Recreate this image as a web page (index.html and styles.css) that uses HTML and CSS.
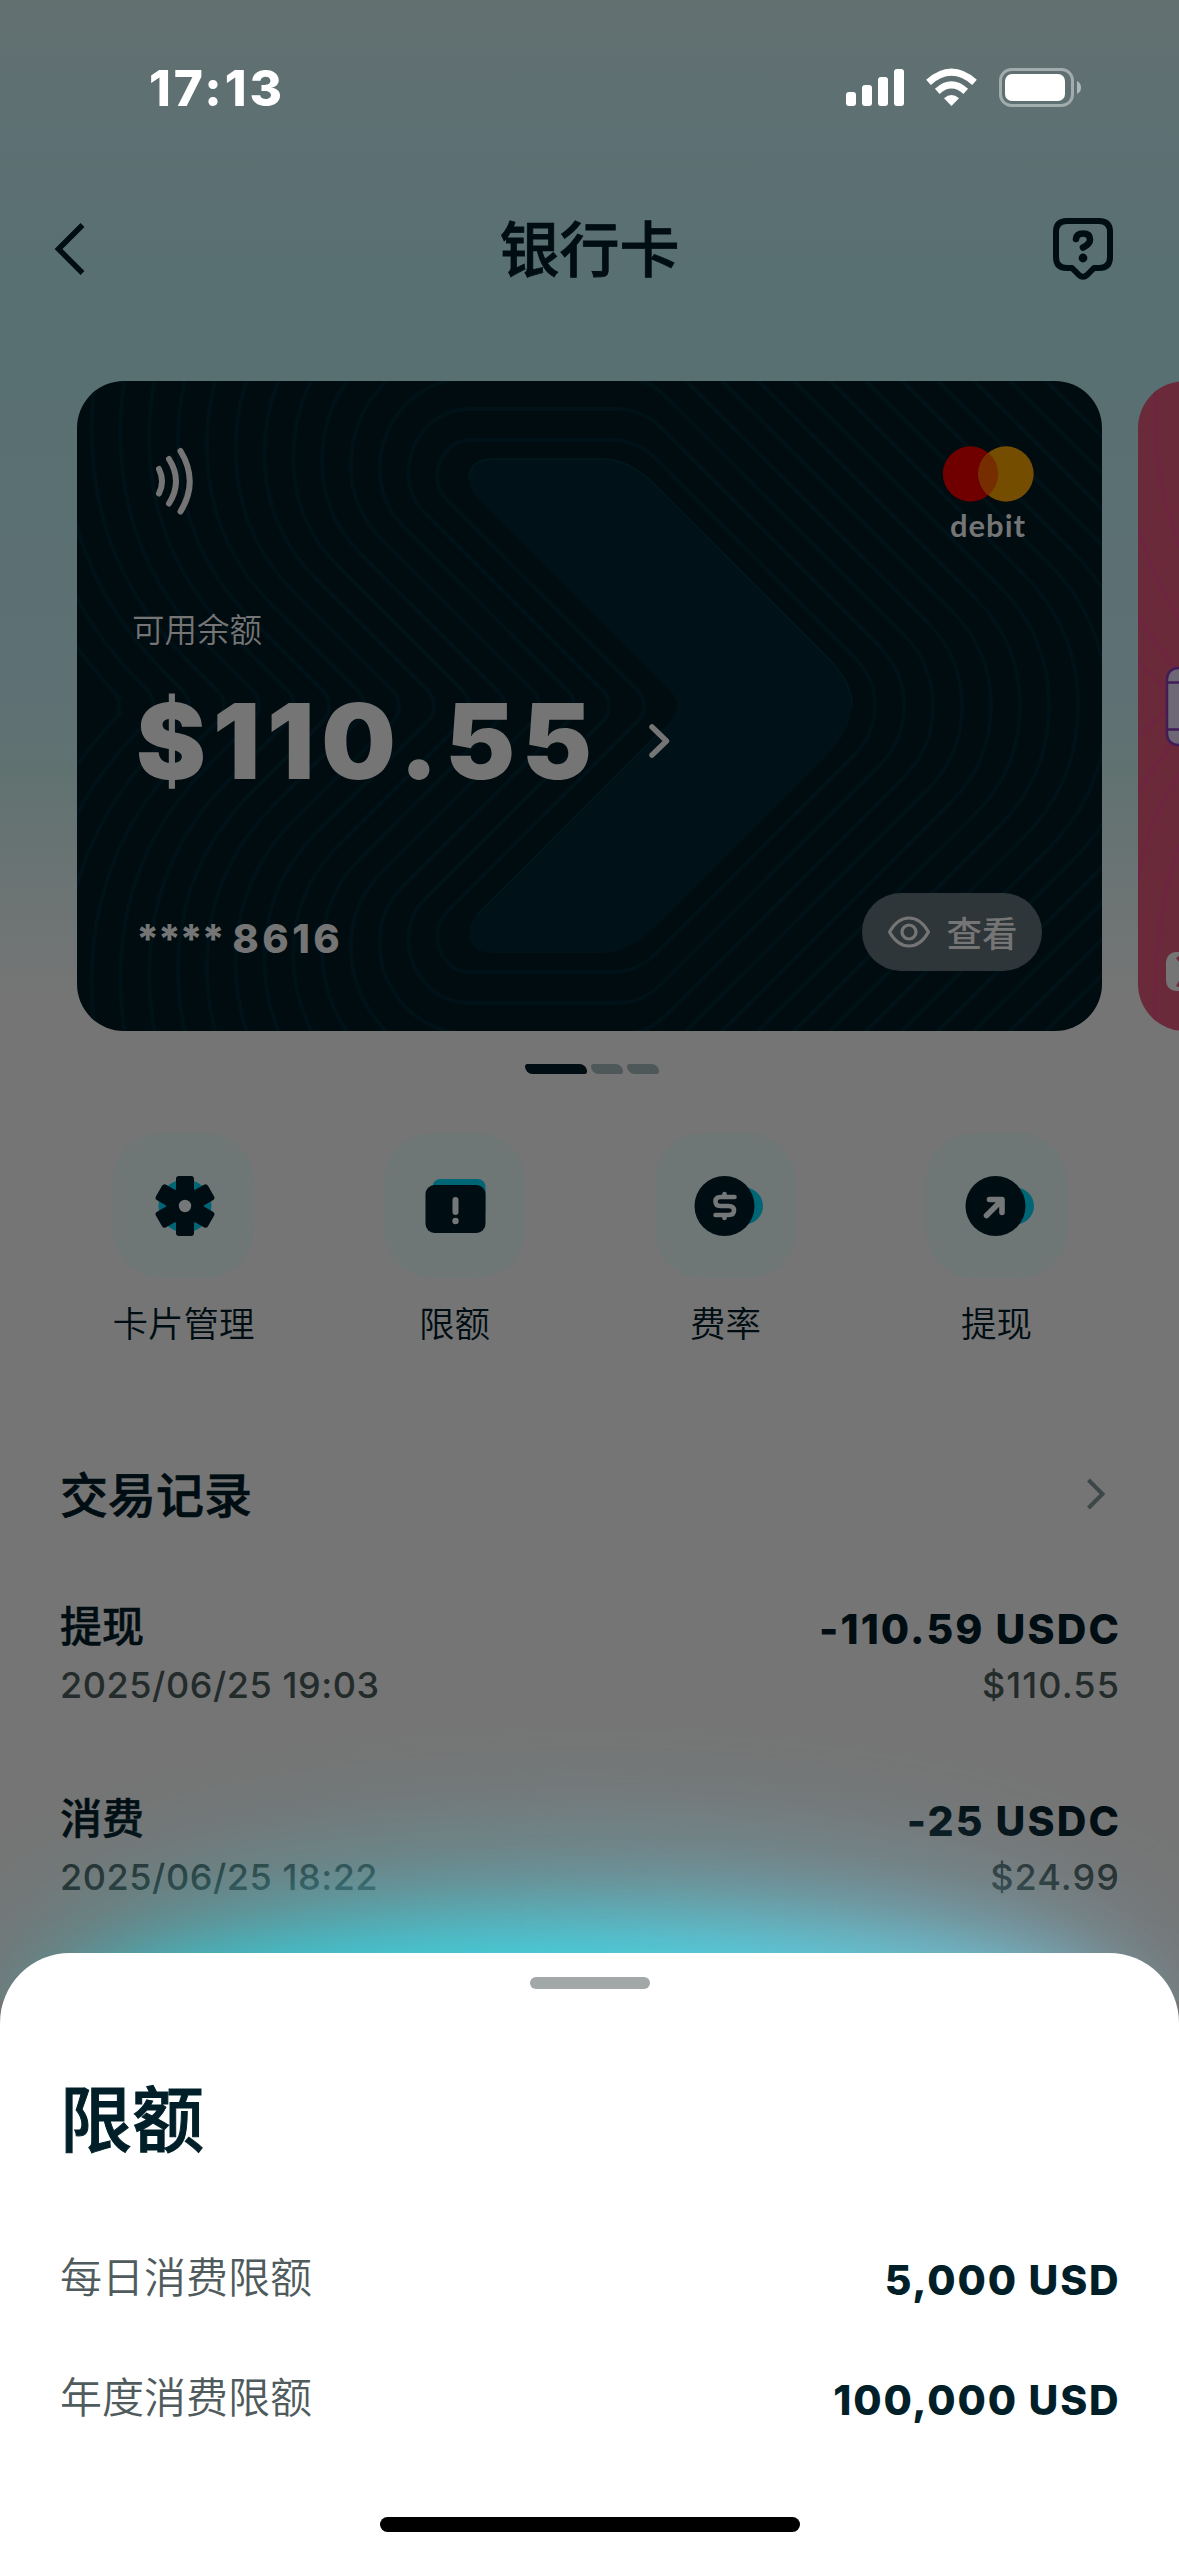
FILE: index.html
```html
<!DOCTYPE html>
<html lang="zh-CN">
<head>
<meta charset="utf-8">
<title>银行卡</title>
<link rel="stylesheet" href="styles.css">
</head>
<body>
<div class="screen">
  <header class="status-bar">
    <span class="clock">17:13</span>
    <svg class="status-icons" width="240" height="42" viewBox="0 0 240 42">
      <g fill="#fff">
        <rect x="1" y="24" width="10" height="14" rx="3"/>
        <rect x="17" y="17" width="10" height="21" rx="3"/>
        <rect x="33" y="9" width="10" height="29" rx="3"/>
        <rect x="49" y="1" width="10" height="37" rx="3"/>
        <path d="M106.500 38 L99 30.300 Q106.500 23.500 114 30.300Z"/>
      </g>
      <g fill="none" stroke="#fff" stroke-width="7">
        <path d="M83.500 14.300 Q106.500 -6 129.500 14.300"/>
        <path d="M92.300 23.300 Q106.500 10.500 120.700 23.300"/>
      </g>
      <rect x="155.500" y="1.500" width="72" height="36" rx="11" fill="none" stroke="#fff" stroke-opacity=".42" stroke-width="3"/>
      <rect x="160" y="6" width="60" height="27" rx="7" fill="#fff"/>
      <path d="M232 13 Q236 15 236 19.500 Q236 24 232 26Z" fill="#fff" fill-opacity=".5"/>
    </svg>
  </header>

  <nav class="nav-bar">
    <svg width="36" height="60" viewBox="0 0 36 60" fill="none" stroke="#000d12" stroke-width="5.500"><path d="M29.500 6 L5.500 30 L29.500 54"/></svg>
    <h1 class="nav-title">银行卡</h1>
    <svg width="62" height="64" viewBox="0 0 62 64" fill="none" stroke="#000d12" stroke-linecap="round" stroke-linejoin="round">
      <path stroke-width="6" d="M15 4 H47 Q58 4 58 15 V40 Q58 51 47 51 H42 L35 58 Q31 61.500 27 58 L20 51 H15 Q4 51 4 40 V15 Q4 4 15 4Z"/>
      <path stroke-width="6.600" d="M24 22 Q24.500 16.500 31 16.500 Q38 16.500 38 22.500 Q38 27 31 30.500"/>
      <circle cx="31" cy="41" r="4.400" fill="#000d12" stroke="none"/>
    </svg>
  </nav>

  <section class="carousel">
    <article class="card">
      <svg class="card-art" width="1025" height="650" viewBox="0 0 1025 650">
        <g id="contours" fill="none" stroke="#001218" stroke-width="4"></g>
        <path fill="#001117" d="M418 78 H525 Q552 78 579 105 L749 275 Q775 301 775 325 Q775 349 749 375 L579 545 Q552 572 525 572 H418 Q392 572 392 552 Q392 542 400 534 L586 348 Q600 334 600 325 Q600 316 586 302 L400 116 Q392 108 392 98 Q392 78 418 78Z"/>
        <path fill="none" stroke="#00171b" stroke-width="2" d="M392 98 Q392 78 418 78 H525 Q552 78 579 105 L749 275 Q775 301 775 325 M400 534 L586 348"/>
      </svg>
      <div class="card-top">
        <svg class="contactless" width="42" height="68" viewBox="0 0 42 68" fill="none" stroke="#757575" stroke-width="6" stroke-linecap="round">
          <path d="M5 22 Q11 34.500 5 46.500M15 12 Q29 34.500 15 56.500M26.500 4 Q45 34.500 26.500 64.500"/>
        </svg>
        <div class="brand">
          <svg width="92" height="58" viewBox="0 0 92 58">
            <circle cx="28.500" cy="29" r="27.700" fill="#700000"/>
            <circle cx="64" cy="29" r="27.700" fill="#754d00"/>
            <path d="M46.250 7.700 A27.700 27.700 0 0 1 46.250 50.300 A27.700 27.700 0 0 1 46.250 7.700Z" fill="#762e00"/>
          </svg>
          <span class="brand-name">debit</span>
        </div>
      </div>
      <div class="balance-label">可用余额</div>
      <div class="balance">
        <span class="balance-value">$110.55</span>
        <svg width="24" height="36" viewBox="0 0 24 36" fill="none" stroke="#757575" stroke-width="5.500" stroke-linecap="round" stroke-linejoin="round"><path d="M4 4 L18.500 18 L4 32"/></svg>
      </div>
      <div class="card-bottom">
        <span class="card-number"><span class="mask">****</span> 8616</span>
        <button class="view-button">
          <svg width="44" height="34" viewBox="0 0 44 34" fill="none" stroke="#757575" stroke-width="3.200" stroke-linejoin="round">
            <path d="M2.500 17 Q10.500 3 22 3 Q33.500 3 41.500 17 Q33.500 31 22 31 Q10.500 31 2.500 17Z"/><circle cx="22" cy="17" r="7"/>
          </svg>
          <span class="view-label">查看</span>
        </button>
      </div>
    </article>
    <article class="card card-next">
      <svg width="41" height="650" viewBox="0 0 41 650">
        <g fill="none" stroke="#6f2442" stroke-width="3">
          <path d="M17 0 V40 Q17 100 41 165M0 148 Q12 190 41 238M0 235 L41 295M0 355 L41 318M0 410 L41 352M0 500 Q5 450 41 393M17 650 Q14 540 41 465M0 282 L28 308"/>
        </g>
        <rect x="29" y="287" width="60" height="77" rx="11" fill="#6e6876" stroke="#401d56" stroke-width="2.500"/>
        <path d="M29 301.500 H41 M29 348.500 H41" stroke="#401d56" stroke-width="2.500"/>
        <rect x="28" y="571" width="60" height="39" rx="10" fill="#757575"/>
        <path d="M38 577 L41 581 V575Z M38 605 L41 600 V606Z" fill="#6b2a3a"/>
      </svg>
    </article>
  </section>

  <div class="pager"><i class="page current"></i><i class="page"></i><i class="page"></i></div>

  <section class="actions">
    <div class="action">
      <div class="tile">
        <svg width="84" height="68" viewBox="-43 -34 84 68">
          <circle r="26.500" fill="#006676"/>
          <g fill="#000d12">
            <circle r="19"/>
            <rect x="-9" y="-30" width="18" height="60" rx="3"/>
            <rect x="-9" y="-30" width="18" height="60" rx="3" transform="rotate(60)"/>
            <rect x="-9" y="-30" width="18" height="60" rx="3" transform="rotate(120)"/>
          </g>
          <circle r="6.200" fill="#757878"/>
        </svg>
      </div>
      <span class="action-label">卡片管理</span>
    </div>
    <div class="action">
      <div class="tile">
        <svg width="84" height="68" viewBox="-42.500 -34 84 68">
          <rect x="-23" y="-27" width="53" height="40" rx="8" fill="#006676"/>
          <rect x="-30" y="-21" width="60" height="48" rx="9" fill="#000d12"/>
          <path d="M0 -6 V6" stroke="#757878" stroke-width="6" stroke-linecap="round"/>
          <circle cy="15" r="3.200" fill="#757878"/>
        </svg>
      </div>
      <span class="action-label">限额</span>
    </div>
    <div class="action">
      <div class="tile">
        <svg width="84" height="68" viewBox="-42.500 -34 84 68">
          <circle cx="18" r="18.500" fill="#006676"/>
          <circle cx="-2" r="30" fill="#000d12"/>
          <path d="M8 -9 H-6 Q-11 -9 -11 -4.500 Q-11 0 -6 0 H2 Q7.500 0 7.500 4.500 Q7.500 9 2 9 H-11 M-2 -12 V-9 M-2 9 V12" fill="none" stroke="#757878" stroke-width="4.600" stroke-linecap="round"/>
        </svg>
      </div>
      <span class="action-label">费率</span>
    </div>
    <div class="action">
      <div class="tile">
        <svg width="84" height="68" viewBox="-42.500 -34 84 68">
          <circle cx="18" r="18.500" fill="#006676"/>
          <circle cx="-2" r="30" fill="#000d12"/>
          <path d="M-11 9.500 L3 -4.500 M-8 -6.500 H4.500 V6.500" fill="none" stroke="#757878" stroke-width="5.600" stroke-linecap="round" stroke-linejoin="round"/>
        </svg>
      </div>
      <span class="action-label">提现</span>
    </div>
  </section>

  <section class="transactions">
    <div class="section-head">
      <h2 class="section-title">交易记录</h2>
      <svg width="24" height="36" viewBox="0 0 24 36" fill="none" stroke="#3d4748" stroke-width="4"><path d="M3.500 3 L17.500 17 L3.500 31"/></svg>
    </div>
    <div class="transaction">
      <div class="line main"><span>提现</span><b>-110.59 USDC</b></div>
      <div class="line sub"><span>2025/06/25 19:03</span><span class="fiat">$110.55</span></div>
    </div>
    <div class="transaction">
      <div class="line main"><span>消费</span><b>-25 USDC</b></div>
      <div class="line sub"><span>2025/06/25 18:22</span><span class="fiat">$24.99</span></div>
    </div>
  </section>

  <div class="glow"><div class="glow-halo"></div><div class="glow-core"></div></div>

  <section class="sheet">
    <div class="grabber"></div>
    <h2 class="sheet-title">限额</h2>
    <div class="limit"><span>每日消费限额</span><b>5,000 USD</b></div>
    <div class="limit"><span>年度消费限额</span><b>100,000 USD</b></div>
    <div class="home-indicator"></div>
  </section>
</div>
<script src="script.js"></script>
</body>
</html>
```

FILE: styles.css
```css
* { box-sizing: border-box; }
body { margin: 0; font-family: Inter, "Noto Sans CJK SC", sans-serif; color: #000d12; }
h1, h2 { margin: 0; }

.screen {
  position: relative;
  width: 1179px;
  height: 2556px;
  overflow: hidden;
  display: flex;
  flex-direction: column;
  background: linear-gradient(#637070 0, #5d7073 140px, #587072 290px, #5a7072 480px, #5e7074 690px, #607270 770px, #6b7474 880px, #757575 1000px);
}

.status-bar { height: 176px; padding: 0 94px 0 149px; display: flex; justify-content: space-between; align-items: center; }
.clock { font-size: 49.5px; font-weight: 800; color: #fff; line-height: 60px; letter-spacing: 3px; }
.status-icons { margin-top: 2px; }

.nav-bar { height: 146px; padding: 0 65px 0 53px; display: flex; justify-content: space-between; align-items: center; }
.nav-title { font-size: 60px; font-weight: 500; line-height: 80px; margin-left: 38px; padding-top: 1px; -webkit-text-stroke: .8px; }

.carousel { margin-top: 59px; padding-left: 77px; display: flex; gap: 36px; }
.card { position: relative; flex: none; width: 1025px; height: 650px; border-radius: 47px; overflow: hidden; background: #000c10; color: #757575; display: flex; flex-direction: column; padding: 0 60px 0 55px; }
.card-art { position: absolute; left: 0; top: 0; }
.card > div { position: relative; }
.card-next { padding: 0; background: #6b2a3a; }
.card-top { height: 225px; padding: 64px 8px 0 22px; display: flex; justify-content: space-between; align-items: flex-start; }
.contactless { margin-top: 2px; }
.brand { display: flex; flex-direction: column; align-items: center; }
.brand-name { font-family: Lato, sans-serif; font-weight: 700; font-size: 31px; line-height: 36px; letter-spacing: 1px; margin-top: 4px; }
.balance-label { font-size: 32.5px; line-height: 50px; font-weight: 350; }
.balance { height: 170px; display: flex; align-items: center; gap: 49px; padding-left: 4px; }
.balance-value { font-size: 105px; font-weight: 900; line-height: 120px; letter-spacing: 6.8px; }
.card-bottom { height: 78px; margin-top: 67px; padding-left: 4px; display: flex; justify-content: space-between; align-items: center; }
.card-number { font-size: 40px; font-weight: 800; line-height: 50px; letter-spacing: 3.4px; word-spacing: -3px; padding-top: 14px; }
.mask { letter-spacing: -1.5px; }
.view-button { width: 180px; height: 78px; border: 0; border-radius: 39px; background: #2e3639; color: #757575; font: 500 35.5px/50px Inter, "Noto Sans CJK SC", sans-serif; display: flex; align-items: center; justify-content: center; gap: 15px; padding: 0 0 0 1px; }
.view-label { padding-top: 5px; }

.pager { margin-top: 33px; height: 10px; display: flex; justify-content: center; gap: 4px; padding-left: 5px; }
.page { width: 32px; height: 10px; background: #4f5858; border-radius: 3px 9px 3px 9px; }
.page.current { width: 62px; background: #000d12; }

.actions { margin-top: 59px; padding: 0 47px 0 48px; display: grid; grid-template-columns: repeat(4, 1fr); }
.action { display: flex; flex-direction: column; align-items: center; gap: 21px; }
.tile { width: 141px; height: 145px; border-radius: 48px; background: #6f7676; display: flex; align-items: center; justify-content: center; }
.action-label { font-size: 35.5px; line-height: 52px; font-weight: 350; }

.transactions { padding: 0 60px; }
.section-head { display: flex; justify-content: space-between; align-items: center; height: 80px; margin-top: 104px; padding-right: 10px; }
.section-title { font-size: 48px; line-height: 70px; font-weight: 500; padding-top: 1px; -webkit-text-stroke: .7px; }
.transaction { height: 192px; padding-top: 62px; margin-bottom: 0; }
.line { display: flex; justify-content: space-between; align-items: center; }
.main { height: 60px; font-size: 42px; font-weight: 500; line-height: 60px; -webkit-text-stroke: .5px; }
.main b { font-size: 41px; font-weight: 800; padding-top: 4px; letter-spacing: 2.1px; margin-right: -2px; -webkit-text-stroke: 0; }
.sub { height: 56px; font-size: 36px; font-weight: 450; color: #232b2b; line-height: 56px; letter-spacing: .55px; }
.fiat { letter-spacing: 1.1px; margin-right: -1px; }

.glow { position: absolute; left: 0; top: 1600px; width: 1179px; height: 401px; overflow: hidden; }
.glow-halo { position: absolute; left: 20px; top: 255px; width: 1130px; height: 320px; border-radius: 50%; background: linear-gradient(90deg, #45a9ae, #68afbd 60%, #7babbd); filter: blur(62px); opacity: .68; }
.glow-core { position: absolute; left: 60px; top: 326px; width: 1080px; height: 240px; border-radius: 46%; background: linear-gradient(90deg, #2cc9d2, #45d4e3 50%, #7cc4da); filter: blur(38px); }

.sheet { position: absolute; left: 0; bottom: 0; width: 1179px; height: 603px; padding: 24px 60px 0; border-radius: 70px 70px 0 0; background: #fff; color: #011f28; display: flex; flex-direction: column; }
.grabber { align-self: center; width: 120px; height: 12px; border-radius: 6px; background: #a2a7a7; }
.sheet-title { margin: 81px 0 48px; font-size: 72px; line-height: 100px; font-weight: 500; -webkit-text-stroke: 1px; }
.limit { height: 120px; display: flex; justify-content: space-between; align-items: center; font-size: 42px; line-height: 60px; color: #4f5b5c; font-weight: 350; }
.limit b { font-size: 41px; font-weight: 800; color: #011f28; letter-spacing: 1.8px; margin-right: -1.5px; padding-top: 4px; }
.home-indicator { align-self: center; width: 420px; height: 15px; margin-top: 59px; border-radius: 8px; background: #000; }
```

FILE: script.js
```js
// Contour lines around the card's arrow. Each one is built for the upper half
// and mirrored about the card's horizontal axis (y = 325).
const AXIS = 325;
const group = document.getElementById("contours");

function half(k, flip) {
  const p = (x, y) => `${x.toFixed(1)} ${(flip ? 2 * AXIS - y : y).toFixed(1)}`;
  const top = 90 - 31 * k;
  const left = 389 - 28.8 * k;
  const leftY = 100 - 4 * k;
  const diag = 465 + 36 * k;
  const right = 769 + 29 * k;
  const notch = 602 - 35 * k;
  const inner = notch - 316;
  const tipY = right - diag;
  const tipM = (AXIS - tipY) * 0.7;
  const backY = left - inner;
  const backM = (backY - leftY) * 0.7;
  const startX = 392;
  const bend = 26;
  return [
    `M${p(right, AXIS)}`,
    `Q${p(right, tipY)} ${p(right - tipM, tipY - tipM)}`,
    `L${p(top + diag + bend * 0.7, top + bend * 0.7)}`,
    `Q${p(top + diag, top)} ${p(top + diag - bend, top)}`,
    `L${p(startX, top)}`,
    `C${p(startX - (startX - left) * 0.55, top)} ${p(left, leftY - (leftY - top) * 0.55)} ${p(left, leftY)}`,
    `Q${p(left, backY)} ${p(left + backM, backY + backM)}`,
    `L${p(notch - 6, AXIS - 15)}`,
    `Q${p(notch, AXIS - 9)} ${p(notch, AXIS)}`,
  ].join("");
}

for (let k = 1; k <= 16; k++) {
  const path = document.createElementNS("http://www.w3.org/2000/svg", "path");
  path.setAttribute("d", half(k, false) + half(k, true));
  group.appendChild(path);
}
```
